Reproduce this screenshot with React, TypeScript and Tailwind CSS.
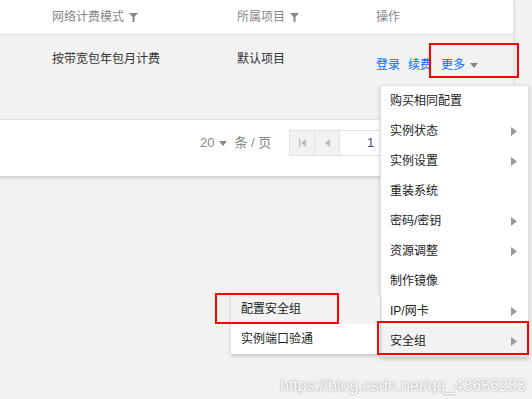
import React from "react";

const Funnel = () => (
  <svg width="9" height="10" viewBox="0 0 9 10" className="inline-block ml-[5px]">
    <path d="M0 1 H9 L5.5 5 V10 H3.5 V5 Z" fill="#888" />
  </svg>
);

const RightTri = () => (
  <svg width="6" height="9" viewBox="0 0 6 9">
    <path d="M0 0 L6 4.5 L0 9 Z" fill="#999" />
  </svg>
);

const menuItems: { label: string; sub?: boolean; active?: boolean }[] = [
  { label: "购买相同配置" },
  { label: "实例状态", sub: true },
  { label: "实例设置", sub: true },
  { label: "重装系统" },
  { label: "密码/密钥", sub: true },
  { label: "资源调整", sub: true },
  { label: "制作镜像" },
  { label: "IP/网卡", sub: true },
  { label: "安全组", sub: true, active: true },
];

export default function App() {
  return (
    <div
      className="relative w-[532px] h-[399px] overflow-hidden bg-[#f2f2f2] text-[12px] text-[#333]"
      style={{ fontFamily: '"Liberation Sans", "Noto Sans CJK SC", sans-serif' }}
    >
      <div className="w-[514px] bg-white border-r border-[#e5e5e5] shadow-[0_2px_3px_rgba(0,0,0,0.15)]">
        {/* header */}
        <div className="flex h-[35px] items-center border-b border-[#e2e2e2] text-[#888] leading-[18px]">
          <div className="w-[237px] pl-[52px] flex items-center">网络计费模式<Funnel /></div>
          <div className="w-[139px] flex items-center">所属项目<Funnel /></div>
          <div>操作</div>
        </div>
        {/* row */}
        <div className="flex h-[85px] bg-[#f2f2f2] border-b border-[#e2e2e2] pt-[15px] leading-[18px]">
          <div className="w-[237px] pl-[52px]">按带宽包年包月计费</div>
          <div className="w-[139px]">默认项目</div>
          <div className="flex items-center mt-[6px] h-[18px] text-[#006eff]">
            <span>登录</span>
            <span className="ml-[8px]">续费</span>
            <span className="ml-[9px]">更多</span>
            <svg width="8" height="5" viewBox="0 0 8 5" className="ml-[5px]">
              <path d="M0 0 H8 L4 5 Z" fill="#888" />
            </svg>
          </div>
        </div>
        {/* pagination */}
        <div className="h-[56px] flex items-start pt-[10px] pl-[200px]">
          <div className="flex items-center h-[26px] text-[#888] text-[13px]">
            <span>20</span>
            <svg width="8" height="5" viewBox="0 0 8 5" className="ml-[5px]">
              <path d="M0 0 H8 L4 5 Z" fill="#888" />
            </svg>
            <span className="ml-[7px]">条 / 页</span>
          </div>
          <div className="ml-[18px] flex h-[26px] border border-[#e2e2e2]">
            <div className="w-[25px] bg-[#f2f2f2] border-r border-[#e2e2e2] flex items-center justify-center">
              <svg width="7" height="8" viewBox="0 0 7 8">
                <rect x="0" y="0" width="1.3" height="8" fill="#bbb" />
                <path d="M7 0 V8 L2 4 Z" fill="#bbb" />
              </svg>
            </div>
            <div className="w-[25px] bg-[#f2f2f2] border-r border-[#e2e2e2] flex items-center justify-center">
              <svg width="5" height="8" viewBox="0 0 5 8">
                <path d="M5 0 V8 L0 4 Z" fill="#bbb" />
              </svg>
            </div>
            <div className="w-[60px] bg-white flex items-center justify-end pr-[26px] text-[13px] text-[#5a3f6a]">1</div>
          </div>
        </div>
      </div>

      {/* main dropdown */}
      <div className="absolute left-[380px] top-[85px] w-[149px] bg-white border border-[#e2e2e2] shadow-[0_2px_4px_rgba(0,0,0,0.2)] text-[#222]">
        {menuItems.map((m) => (
          <div
            key={m.label}
            className={`h-[30px] flex items-center justify-between pl-[9px] pr-[11px] ${m.active ? "bg-[#f2f2f2]" : ""}`}
          >
            <span>{m.label}</span>
            {m.sub ? <RightTri /> : null}
          </div>
        ))}
      </div>

      {/* submenu */}
      <div className="absolute left-[231px] top-[294px] w-[149px] bg-white shadow-[0_2px_4px_rgba(0,0,0,0.2)] text-[#222]">
        <div className="h-[30px] flex items-center pl-[10px] bg-[#f2f2f2]">配置安全组</div>
        <div className="h-[30px] flex items-center pl-[10px]">实例端口验通</div>
      </div>

      {/* annotations */}
      <div className="absolute left-[429px] top-[43px] w-[90px] h-[35px] border-2 border-[#ff0000]" />
      <div className="absolute left-[215px] top-[293px] w-[124px] h-[31px] border-2 border-[#ff0000]" />
      <div className="absolute left-[377px] top-[321px] w-[152px] h-[34px] border-2 border-[#ff0000]" />

      {/* watermark */}
      <div className="absolute left-[280px] top-[376px] text-[16px] leading-[20px] text-white [text-shadow:0_0_2px_#999,0_0_1px_#bbb]">
        https://blog.csdn.net/qq_43656233
      </div>
    </div>
  );
}
